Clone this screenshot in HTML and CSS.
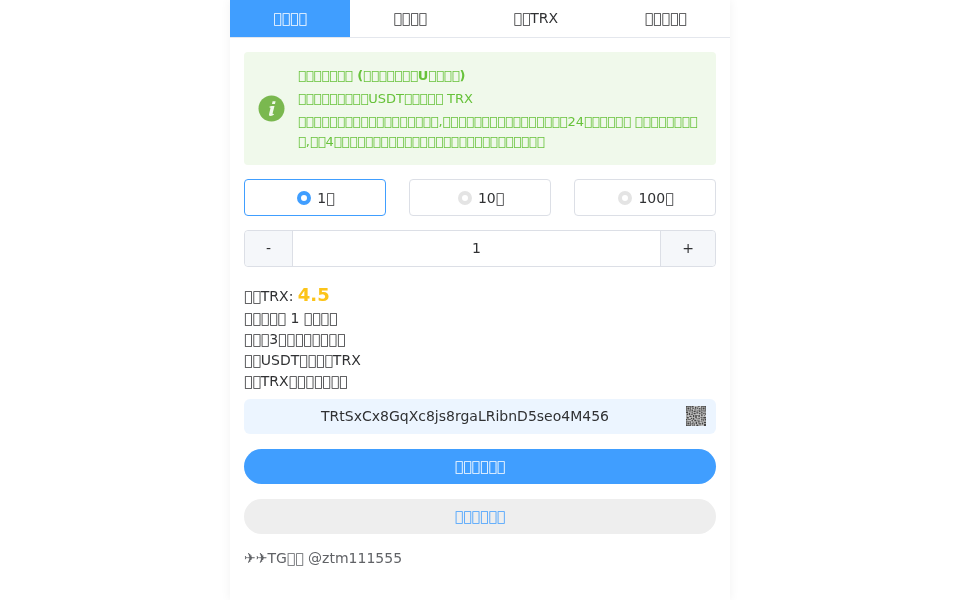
FILE: index.html
```html
<!DOCTYPE html>
<html lang="zh">

<head>
    <meta charset="UTF-8">
    <meta name="viewport" content="width=device-width, initial-scale=1.0">
    <title>TRX</title>
    <link rel="stylesheet" href="styles.css">
</head>

<body>
    <!-- The reference shows its CJK text as missing-glyph boxes, so U+E000 stands in for each box. -->
    <div class="container">
        <div class="tabs">
            <div class="tab active">&#xE000;&#xE000;&#xE000;&#xE000;</div>
            <div class="tab">&#xE000;&#xE000;&#xE000;&#xE000;</div>
            <div class="tab">&#xE000;&#xE000;TRX</div>
            <div class="tab">&#xE000;&#xE000;&#xE000;&#xE000;&#xE000;</div>
        </div>
        <div class="content">
            <div class="alert">
                <svg class="alert-icon" viewBox="0 0 27 27">
                    <circle cx="13.5" cy="13.5" r="13" fill="#7ab84f" />
                    <path d="M14.6 6.2h3l-.6 2.800h-3zM13.600 11h2.900l-1.900 7.600c-.1.5.4.6 1.400.1l-.2 1c-1.300.8-2.500 1.200-3.600 1.200-1.100 0-1.400-.7-1.100-1.900l1.400-5.900c.1-.6-.4-.7-1.100-.6l.2-.9z" fill="#f0f9eb" />
                </svg>
                <div class="alert-body">
                    <div class="alert-title">&#xE000;&#xE000;&#xE000;&#xE000;&#xE000;&#xE000;&#xE000; (&#xE000;&#xE000;&#xE000;&#xE000;&#xE000;&#xE000;&#xE000;U&#xE000;&#xE000;&#xE000;&#xE000;)</div>
                    <div class="alert-line">&#xE000;&#xE000;&#xE000;&#xE000;&#xE000;&#xE000;&#xE000;&#xE000;&#xE000;USDT&#xE000;&#xE000;&#xE000;&#xE000;&#xE000; TRX</div>
                    <div class="alert-line">&#xE000;&#xE000;&#xE000;&#xE000;&#xE000;&#xE000;&#xE000;&#xE000;&#xE000;&#xE000;&#xE000;&#xE000;&#xE000;&#xE000;&#xE000;&#xE000;&#xE000;&#xE000;,&#xE000;&#xE000;&#xE000;&#xE000;&#xE000;&#xE000;&#xE000;&#xE000;&#xE000;&#xE000;&#xE000;&#xE000;&#xE000;&#xE000;&#xE000;&#xE000;24&#xE000;&#xE000;&#xE000;&#xE000;&#xE000;&#xE000; &#xE000;&#xE000;&#xE000;&#xE000;&#xE000;&#xE000;&#xE000;&#xE000;<wbr>&#xE000;,&#xE000;&#xE000;4&#xE000;&#xE000;&#xE000;&#xE000;&#xE000;&#xE000;&#xE000;&#xE000;&#xE000;&#xE000;&#xE000;&#xE000;&#xE000;&#xE000;&#xE000;&#xE000;&#xE000;&#xE000;&#xE000;&#xE000;&#xE000;&#xE000;&#xE000;&#xE000;&#xE000;&#xE000;&#xE000;</div>
                </div>
            </div>

            <div class="options">
                <div class="option selected"><span class="radio"></span>1&#xE000;</div>
                <div class="option"><span class="radio"></span>10&#xE000;</div>
                <div class="option"><span class="radio"></span>100&#xE000;</div>
            </div>

            <div class="stepper">
                <div class="step-btn minus">-</div>
                <div class="step-value">1</div>
                <div class="step-btn plus">+</div>
            </div>

            <div class="info">
                <div class="price-row">&#xE000;&#xE000;TRX: <span class="price">4.5</span></div>
                <div>&#xE000;&#xE000;&#xE000;&#xE000;&#xE000; 1 &#xE000;&#xE000;&#xE000;&#xE000;</div>
                <div>&#xE000;&#xE000;&#xE000;3&#xE000;&#xE000;&#xE000;&#xE000;&#xE000;&#xE000;&#xE000;&#xE000;</div>
                <div>&#xE000;&#xE000;USDT&#xE000;&#xE000;&#xE000;&#xE000;TRX</div>
                <div>&#xE000;&#xE000;TRX&#xE000;&#xE000;&#xE000;&#xE000;&#xE000;&#xE000;&#xE000;</div>
            </div>

            <div class="address">
                <span class="address-text">TRtSxCx8GqXc8js8rgaLRibnD5seo4M456</span>
                <svg class="qr" viewBox="0 0 29 29">
                    <rect width="29" height="29" fill="#c4c4c4" />
                    <path fill="#444" d="M0 0h7v7H0zM1 1v5h5V1zM2 2h3v3H2zM22 0h7v7h-7zM23 1v5h5V1zM24 2h3v3h-3zM0 22h7v7H0zM1 23v5h5v-5zM2 24h3v3H2zM8 0h3v2H8zM13 1h2v3h-2zM17 0h3v1h-3zM9 3h3v1H9zM16 2h2v2h-2zM19 3h2v2h-2zM8 5h2v3H8zM12 5h3v1h-3zM17 5h1v3h-1zM11 7h3v2h-3zM15 7h2v1h-2zM19 6h2v3h-2zM0 8h3v2H0zM4 8h3v1H4zM8 9h2v2H8zM15 9h3v2h-3zM22 8h2v3h-2zM25 8h4v1h-4zM1 11h2v2H1zM4 10h2v3H4zM7 12h3v1H7zM11 10h3v2h-3zM19 10h2v2h-2zM25 10h2v2h-2zM28 10h1v3h-1zM0 14h3v1H0zM5 14h3v2H5zM10 13h2v3h-2zM13 13h4v1h-4zM18 13h2v3h-2zM22 12h2v3h-2zM26 13h1v2h-1zM1 16h3v2H1zM7 17h2v2H7zM13 15h3v2h-3zM21 16h3v1h-3zM25 16h4v2h-4zM0 19h2v2H0zM3 19h4v1H3zM10 17h2v3h-2zM14 18h3v1h-3zM18 17h2v2h-2zM22 18h2v3h-2zM27 19h2v2h-2zM8 20h2v2H8zM12 20h3v2h-3zM16 20h4v1h-4zM25 19h1v3h-1zM9 23h3v1H9zM14 23h2v3h-2zM17 22h3v2h-3zM21 22h3v1h-3zM26 23h3v2h-3zM8 25h3v2H8zM12 25h1v4h-1zM18 25h4v1h-4zM23 24h2v3h-2zM9 28h2v1H9zM15 27h3v2h-3zM19 27h3v1h-3zM26 26h3v3h-3z" />
                </svg>
            </div>

            <div class="btn btn-primary">&#xE000;&#xE000;&#xE000;&#xE000;&#xE000;&#xE000;</div>
            <div class="btn btn-grey">&#xE000;&#xE000;&#xE000;&#xE000;&#xE000;&#xE000;</div>

            <div class="contact">✈✈TG&#xE000;&#xE000; @ztm111555</div>
        </div>
    </div>
</body>

</html>
```

FILE: styles.css
```css
body {
    margin: 0;
    font-family: 'DejaVu Sans', sans-serif;
    font-size: 14px;
    color: #303133;
    background: white;
}

.container {
    width: 500px;
    min-height: 100vh;
    margin: 0 auto;
    background: white;
    box-shadow: 0 0 10px rgba(0, 0, 0, 0.06);
    will-change: transform;
}

.tabs {
    display: flex;
    height: 37px;
    border-bottom: 1px solid #e4e7ed;
}

.tab {
    flex: 1 1 auto;
    line-height: 37px;
    text-align: center;
}

.tab.active {
    background: #409eff;
    color: white;
}

.content {
    padding: 14px 14px 0;
}

.alert {
    display: flex;
    align-items: center;
    gap: 13px;
    padding: 13px 14px;
    height: 87px;
    background: #f0f9eb;
    color: #67c23a;
    border-radius: 4px;
    font-size: 13px;
}

.alert-icon {
    flex: none;
    width: 27px;
    height: 27px;
}

.alert-title {
    font-weight: bold;
    line-height: 20px;
    margin-bottom: 3px;
}

.alert-line {
    line-height: 20px;
    margin-bottom: 3px;
}

.alert-line:last-child {
    margin-bottom: 0;
}

.options {
    display: flex;
    justify-content: space-between;
    margin-top: 14px;
}

.option {
    display: flex;
    align-items: center;
    justify-content: center;
    gap: 6px;
    box-sizing: border-box;
    width: 142px;
    height: 37px;
    padding-left: 2px;
    border: 1px solid #dcdfe6;
    border-radius: 4px;
}

.option.selected {
    border-color: #409eff;
}

.radio {
    box-sizing: border-box;
    width: 14px;
    height: 14px;
    border: 4px solid #e4e4e4;
    border-radius: 50%;
}

.selected .radio {
    border-color: #409eff;
}

.stepper {
    display: flex;
    box-sizing: border-box;
    height: 37px;
    margin-top: 14px;
    border: 1px solid #dcdfe6;
    border-radius: 4px;
    line-height: 35px;
    text-align: center;
}

.step-btn {
    flex: none;
    background: #f5f7fa;
}

.minus {
    width: 47px;
    border-right: 1px solid #dcdfe6;
    border-radius: 4px 0 0 4px;
}

.plus {
    width: 54px;
    border-left: 1px solid #dcdfe6;
    border-radius: 0 4px 4px 0;
}

.step-value {
    flex: 1;
}

.info {
    margin-top: 16px;
    line-height: 21px;
}

.price-row {
    line-height: 23px;
}

.price {
    color: #fcc419;
    font-size: 18px;
    font-weight: bold;
}

.address {
    display: flex;
    align-items: center;
    box-sizing: border-box;
    height: 35px;
    margin-top: 7px;
    padding: 0 10px 2px 0;
    background: #ecf5ff;
    border-radius: 6px;
}

.address-text {
    flex: 1;
    text-align: center;
}

.qr {
    flex: none;
    width: 20px;
    height: 20px;
}

.btn {
    height: 35px;
    margin-top: 15px;
    line-height: 35px;
    text-align: center;
    border-radius: 18px;
}

.btn-primary {
    background: #409eff;
    color: white;
}

.btn-grey {
    background: #eeeeee;
    color: #409eff;
}

.contact {
    margin-top: 14px;
    line-height: 21px;
    color: #606266;
}
```
